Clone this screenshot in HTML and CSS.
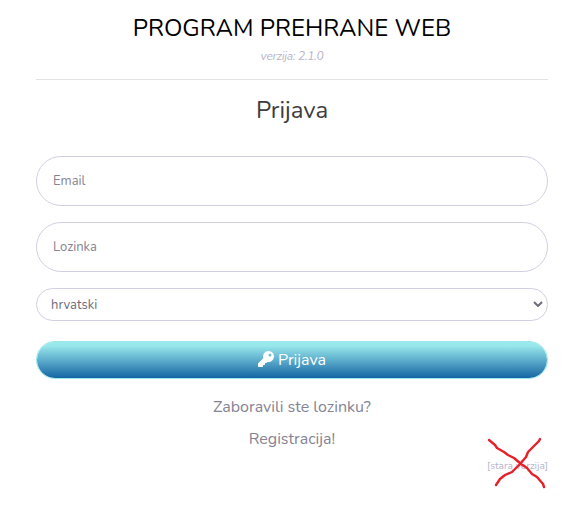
FILE: index.html
```html
<!DOCTYPE html>
<html lang="hr">
<head>
<meta charset="utf-8">
<title>Program prehrane web</title>
<link rel="stylesheet" href="styles.css">
</head>
<body>
<main class="login">
  <header class="brand">
    <h1 class="brand-title">PROGRAM PREHRANE WEB</h1>
    <p class="version">verzija: 2.1.0</p>
  </header>
  <h2 class="heading">Prijava</h2>
  <form class="form">
    <input class="field" type="email" placeholder="Email" aria-label="Email">
    <input class="field" type="password" placeholder="Lozinka" aria-label="Lozinka">
    <div class="select-wrap">
      <select class="select" aria-label="Jezik"><option>hrvatski</option></select>
      <svg class="chevron" viewBox="0 0 10 6"><path d="M1 1l4 4 4-4"/></svg>
    </div>
    <button class="submit" type="button">
      <svg class="key" viewBox="0 0 512 512"><path d="M512 176a176 176 0 0 1-209 173l-24 27a24 24 0 0 1-18 8h-37v40a24 24 0 0 1-24 24h-40v40a24 24 0 0 1-24 24H24a24 24 0 0 1-24-24v-78a24 24 0 0 1 7-17l162-162A176 176 0 1 1 512 176zM336 128a48 48 0 1 0 96 0 48 48 0 1 0-96 0z"/></svg>
      <span class="submit-label">Prijava</span>
    </button>
  </form>
  <nav class="links">
    <a class="link forgot">Zaboravili ste lozinku?</a>
    <a class="link register">Registracija!</a>
  </nav>
  <div class="legacy">
    <a class="legacy-link">[stara verzija]</a>
    <svg class="cross" viewBox="0 0 60 54"><path d="M2 3l6 5 2 3 7 4 4 3 6 3 7 6 6 4 5 6 5 3 6 7 1 3M53 2l-1 2-7 7-4 4-2 5-6 7-8 8-7 3-5 4-4 6"/></svg>
  </div>
</main>
</body>
</html>
```
FILE: styles.css
```css
* { box-sizing: border-box; }
body {
  margin: 0;
  min-height: 506px;
  background: #fff;
  color: #8a8898;
  font: 16px/24px Nunito, "Open Sans", sans-serif;
}
.login { width: 512px; min-height: 506px; margin: 0 39px 0 36px; padding-top: 12px; }
.brand { height: 68px; border-bottom: 1px solid #e3e3e6; text-align: center; }
.brand-title { margin: 0; font-size: 24px; line-height: 32px; font-weight: 400; color: #000; white-space: nowrap; }
.version { margin: 3px 0 0; font-size: 12px; line-height: 18px; font-style: italic; letter-spacing: -.32px; color: #b7b5c6; }
.heading { margin: 14px 0 0; font-size: 24px; line-height: 32px; font-weight: 400; color: #3d3d3d; text-align: center; }
.form { display: flex; flex-direction: column; margin-top: 30px; }
.field {
  height: 50px;
  margin-bottom: 16px;
  padding: 0 16px;
  border: 1px solid #d1cfe2;
  border-radius: 25px;
  background: #fff;
  font: 13px/20px Nunito, "Open Sans", sans-serif;
  outline: 0;
}
.field::placeholder { color: #858394; opacity: 1; }
.select-wrap { position: relative; height: 33px; }
.select {
  width: 100%;
  height: 33px;
  padding: 0 14px;
  border: 1px solid #d1cfe2;
  border-radius: 17px;
  appearance: none;
  background: #fff;
  color: #6e6b7b;
  font: 13px/20px Nunito, "Open Sans", sans-serif;
}
.chevron { position: absolute; right: 5px; top: 13px; width: 10px; height: 6px; fill: none; stroke: #6e6b7b; stroke-width: 2; }
.submit {
  display: flex;
  align-items: center;
  justify-content: center;
  gap: 4px;
  height: 38px;
  margin-top: 20px;
  padding: 0;
  border: 1px solid #98e8ec;
  border-radius: 19px;
  background: linear-gradient(#98e8ec 10%, #1565a5) padding-box;
  color: #fff;
  font: 16px/24px Nunito, "Open Sans", sans-serif;
}
.key { width: 16px; height: 16px; margin-top: -2px; fill: #fff; }
.links { display: flex; flex-direction: column; align-items: center; gap: 8px; margin-top: 16px; }
.link { color: #858394; }
.legacy { position: relative; display: flex; justify-content: flex-end; margin-top: 7px; font-size: 10.2px; line-height: 16px; color: #b7b5cc; }
.cross { position: absolute; right: 1px; top: -21px; width: 60px; height: 54px; fill: none; stroke: #e8202a; stroke-width: 2.4; stroke-linecap: round; stroke-linejoin: round; }
```
